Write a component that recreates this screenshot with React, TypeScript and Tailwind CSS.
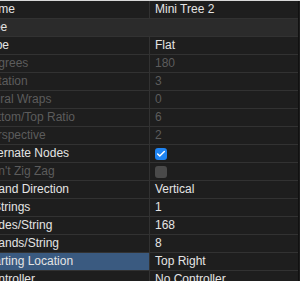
import { Check } from 'lucide-react'

type Row = {
  label: string
  value?: string
  check?: boolean
  disabled?: boolean
  header?: boolean
  selected?: boolean
}

const rows: Row[] = [
  { label: 'Name', value: 'Mini Tree 2' },
  { label: 'Tree', header: true },
  { label: 'Type', value: 'Flat' },
  { label: 'Degrees', value: '180', disabled: true },
  { label: 'Rotation', value: '3', disabled: true },
  { label: 'Spiral Wraps', value: '0', disabled: true },
  { label: 'Bottom/Top Ratio', value: '6', disabled: true },
  { label: 'Perspective', value: '2', disabled: true },
  { label: 'Alternate Nodes', check: true },
  { label: "Don't Zig Zag", check: false, disabled: true },
  { label: 'Strand Direction', value: 'Vertical' },
  { label: '# Strings', value: '1' },
  { label: 'Nodes/String', value: '168' },
  { label: 'Strands/String', value: '8' },
  { label: 'Starting Location', value: 'Top Right', selected: true },
  { label: 'Controller', value: 'No Controller' },
]

export default function App() {
  return (
    <div
      className="w-[300px] h-[281px] overflow-hidden bg-[#1e1e1e] text-[12px] border-t border-[#d8d8d8]"
      style={{ fontFamily: '"Liberation Sans", Arial, sans-serif' }}
    >
      <div className="w-[299px] border-r border-[#111]">
        {rows.map((row) => (
          <div
            key={row.label}
            className={`grid grid-cols-[150px_1fr] h-[18px] border-b border-[#323232] ${
              row.header ? 'bg-[#2b2b2b]' : ''
            }`}
          >
            <div
              className={`overflow-hidden whitespace-nowrap leading-[17px] ${
                row.header ? '' : 'border-r border-[#323232]'
              } ${row.selected ? 'bg-[#3a5a80]' : ''} ${
                row.disabled ? 'text-[#5c5c5c]' : 'text-[#e4e4e4]'
              }`}
            >
              <span className="block -ml-[17px]">{row.label}</span>
            </div>
            <div
              className={`pl-[5px] flex items-center whitespace-nowrap leading-[17px] ${
                row.disabled ? 'text-[#5c5c5c]' : 'text-[#e4e4e4]'
              }`}
            >
              {row.check === true && (
                <span className="w-[12px] h-[12px] rounded-[3px] bg-[#1f84f2] flex items-center justify-center">
                  <Check size={10} strokeWidth={3.5} color="#fff" />
                </span>
              )}
              {row.check === false && (
                <span className="w-[12px] h-[12px] rounded-[3px] bg-[#4a4a4a]" />
              )}
              {row.value}
            </div>
          </div>
        ))}
      </div>
    </div>
  )
}
